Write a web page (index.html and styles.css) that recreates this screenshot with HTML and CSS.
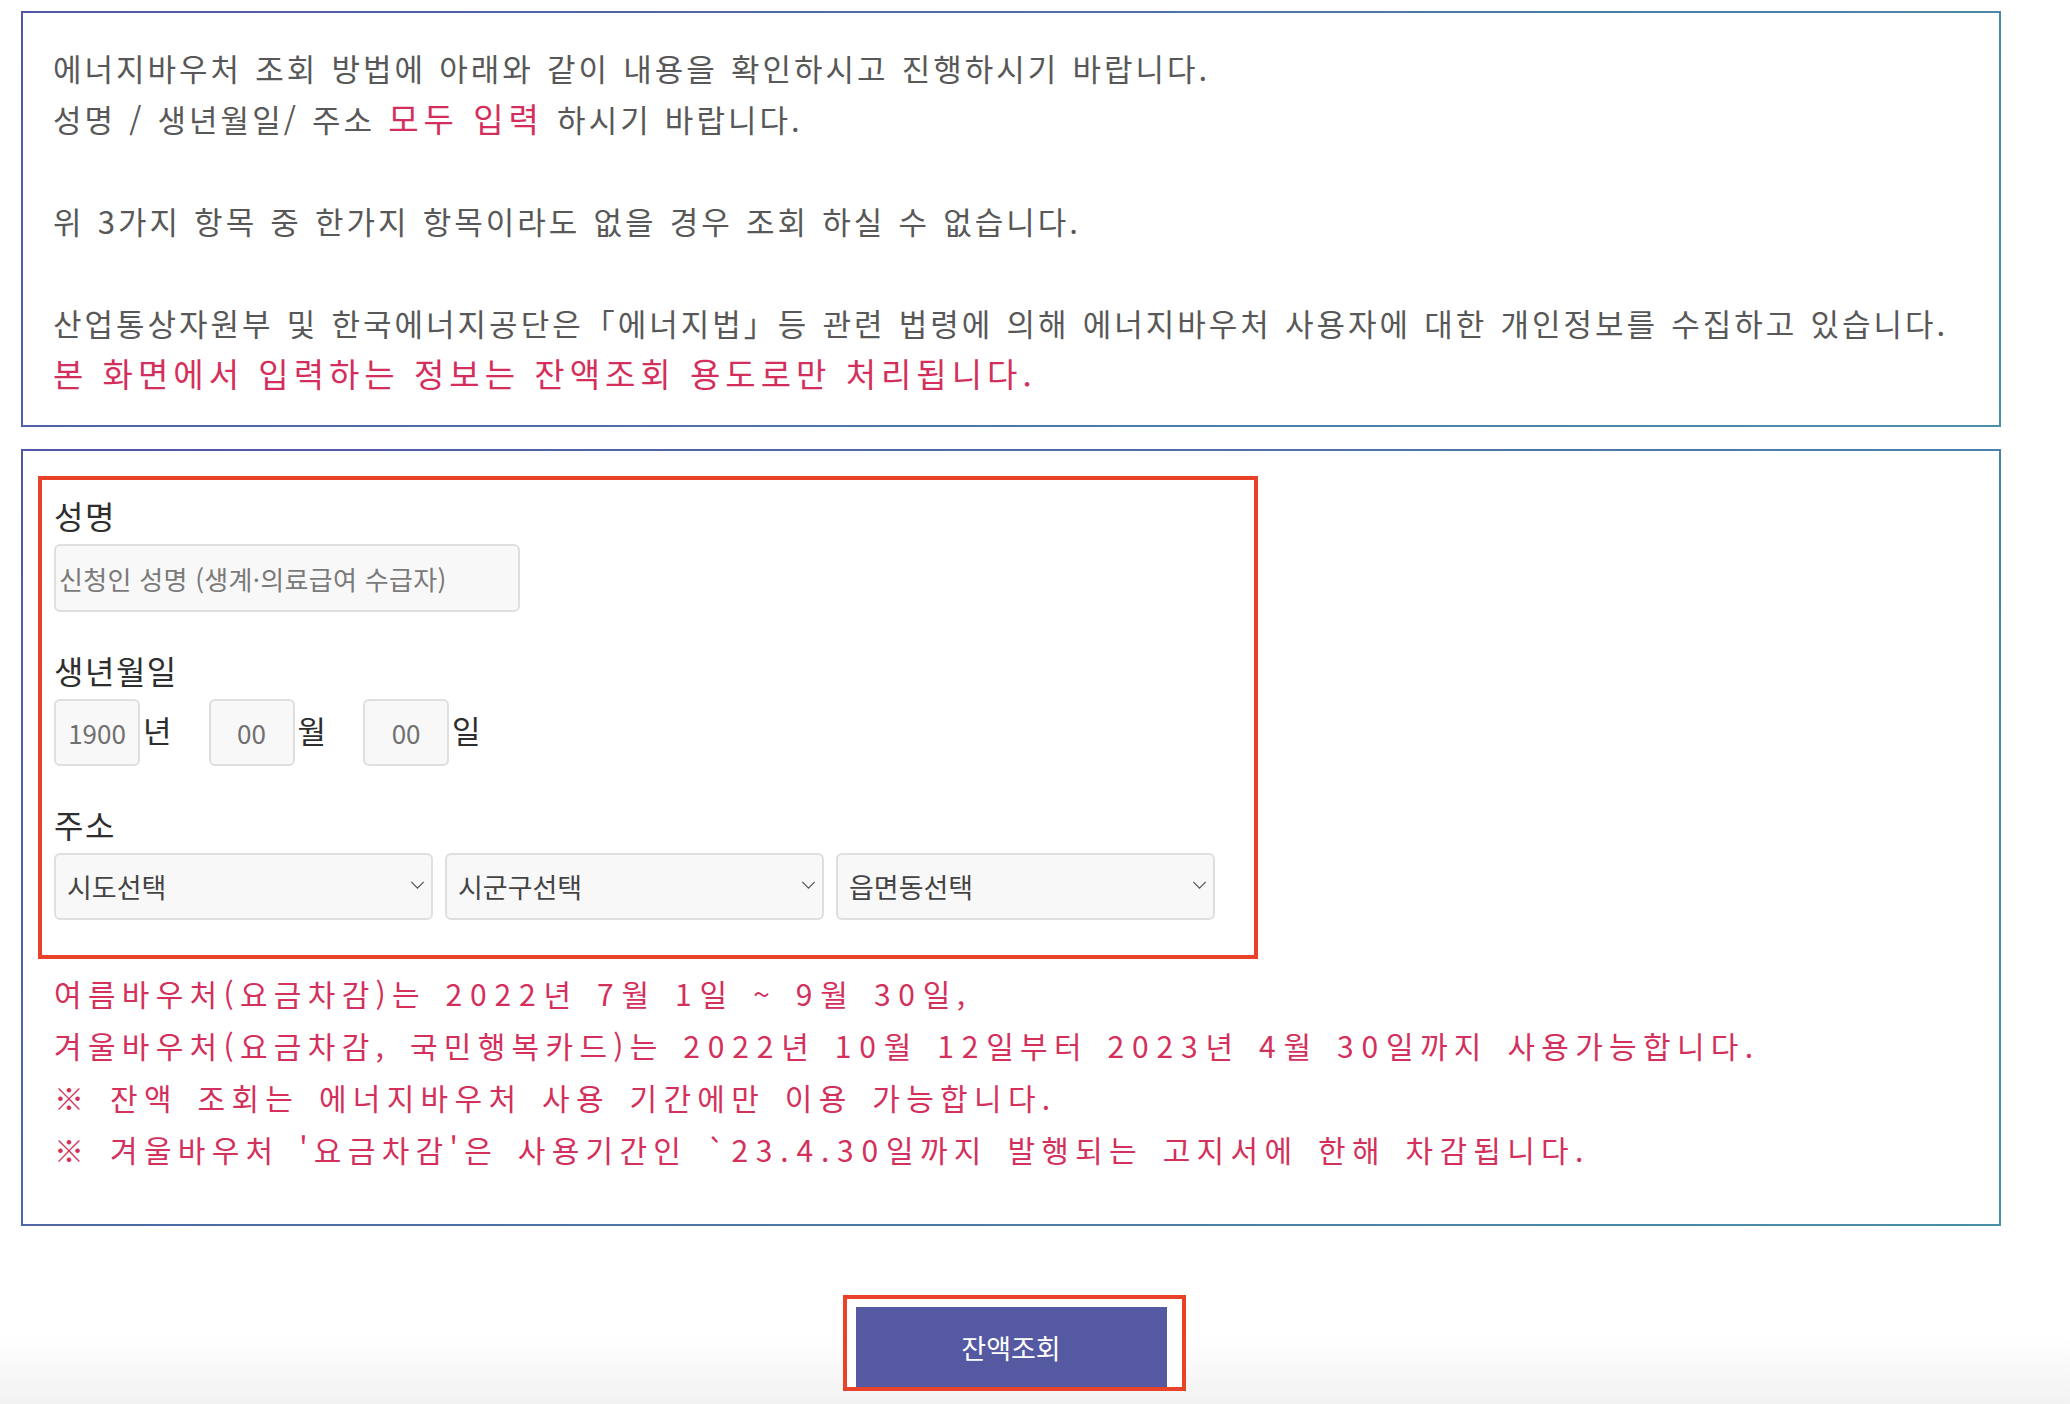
FILE: index.html
```html
<!DOCTYPE html>
<html lang="ko">
<head>
<meta charset="utf-8">
<title>에너지바우처 잔액조회</title>
<link rel="stylesheet" href="styles.css">
</head>
<body>
<div class="page">
  <section class="notice">
    <p>에너지바우처 조회 방법에 아래와 같이 내용을 확인하시고 진행하시기 바랍니다.<br>성명 / 생년월일/ 주소 <span class="em">모두 입력</span> 하시기 바랍니다.</p>
    <p>위 3가지 항목 중 한가지 항목이라도 없을 경우 조회 하실 수 없습니다.</p>
    <p>산업통상자원부 및 한국에너지공단은「에너지법」등 관련 법령에 의해 에너지바우처 사용자에 대한 개인정보를 수집하고 있습니다.<br><span class="em">본 화면에서 입력하는 정보는 잔액조회 용도로만 처리됩니다.</span></p>
  </section>

  <section class="form-box">
    <div class="fields">
      <div class="group">
        <div class="label">성명</div>
        <input class="name-input" type="text" placeholder="신청인 성명 (생계·의료급여 수급자)">
      </div>
      <div class="group">
        <div class="label">생년월일</div>
        <div class="date-row">
          <input class="date-input" type="text" placeholder="1900"><span class="unit">년</span>
          <input class="date-input" type="text" placeholder="00"><span class="unit">월</span>
          <input class="date-input" type="text" placeholder="00"><span class="unit">일</span>
        </div>
      </div>
      <div class="group">
        <div class="label">주소</div>
        <div class="addr-row">
          <div class="select-wrap">
            <select><option>시도선택</option></select>
            <svg class="chev" width="16" height="9" viewBox="0 0 16 9"><path d="M1 1l7 7 7-7" fill="none" stroke="#555" stroke-width="1.4"/></svg>
          </div>
          <div class="select-wrap">
            <select><option>시군구선택</option></select>
            <svg class="chev" width="16" height="9" viewBox="0 0 16 9"><path d="M1 1l7 7 7-7" fill="none" stroke="#555" stroke-width="1.4"/></svg>
          </div>
          <div class="select-wrap">
            <select><option>읍면동선택</option></select>
            <svg class="chev" width="16" height="9" viewBox="0 0 16 9"><path d="M1 1l7 7 7-7" fill="none" stroke="#555" stroke-width="1.4"/></svg>
          </div>
        </div>
      </div>
    </div>
    <div class="notes">
      <p>여름바우처(요금차감)는 <span class="n">2022</span>년 <span class="n">7</span>월 <span class="n">1</span>일 ~ <span class="n">9</span>월 <span class="n">30</span>일,</p>
      <p>겨울바우처(요금차감, 국민행복카드)는 <span class="n">2022</span>년 <span class="n">10</span>월 <span class="n">12</span>일부터 <span class="n">2023</span>년 <span class="n">4</span>월 <span class="n">30</span>일까지 사용가능합니다.</p>
      <p>※ 잔액 조회는 에너지바우처 사용 기간에만 이용 가능합니다.</p>
      <p>※ 겨울바우처 '요금차감'은 사용기간인 `<span class="n">23.4.30</span>일까지 발행되는 고지서에 한해 차감됩니다.</p>
    </div>
  </section>

  <div class="btn-row">
    <div class="btn-frame">
      <button class="btn" type="button">잔액조회</button>
    </div>
  </div>
</div>
</body>
</html>
```
FILE: styles.css
```css
html {
  min-height: 100%;
  background: linear-gradient(180deg, #ffffff 1335px, #f2f2f2 1404px) no-repeat;
}
body {
  margin: 0;
  font-family: "Noto Sans CJK KR", "Noto Sans", sans-serif;
  color: #555;
}
.page {
  padding: 11px 0 0 21px;
  width: 1980px;
}
.notice {
  box-sizing: border-box;
  width: 1980px;
  border: 2px solid #4f6aa6;
  border-image: linear-gradient(135deg, #5356a8, #4891a8) 1;
  padding: 29px 30px 26px 30px;
  font-size: 31px;
  line-height: 51px;
  color: #585858;
  letter-spacing: 3px;
  word-spacing: 1.5px;
}
.notice p {
  margin: 0 0 51px;
}
.notice p:last-child {
  margin-bottom: 0;
}
.em {
  color: #d42f5c;
  font-size: 33px;
  letter-spacing: 5px;
  word-spacing: 0;
}
.form-box {
  box-sizing: border-box;
  width: 1980px;
  margin-top: 22px;
  border: 2px solid #4f6aa6;
  border-image: linear-gradient(135deg, #5356a8, #4891a8) 1;
  padding: 25px 15px 49px 15px;
}
.fields {
  box-sizing: border-box;
  width: 1220px;
  border: 4px solid #e8422a;
  padding: 15px 12px 35px 12px;
}
.group + .group {
  margin-top: 38px;
}
.label {
  font-size: 32px;
  line-height: 40px;
  height: 40px;
  color: #2e2e2e;
  letter-spacing: 1.5px;
  margin-bottom: 9px;
}
input, select, button {
  font-family: "Noto Sans CJK KR", "Noto Sans", sans-serif;
}
.name-input {
  display: block;
  box-sizing: border-box;
  width: 466px;
  height: 68px;
  margin: 0;
  padding: 0 0 0 3px;
  border: 2px solid #dfdfdf;
  border-radius: 6px;
  background: #f8f8f8;
  font-size: 26px;
  letter-spacing: 0.3px;
  color: #333;
  outline: none;
}
.name-input::placeholder {
  color: #7a7a7a;
}
.date-row {
  display: flex;
  align-items: center;
  height: 67px;
}
.date-input {
  box-sizing: border-box;
  width: 86px;
  height: 67px;
  margin: 0;
  padding: 0;
  border: 2px solid #dfdfdf;
  border-radius: 6px;
  background: #f8f8f8;
  font-size: 26px;
  text-align: center;
  color: #333;
  outline: none;
}
.date-input::placeholder {
  color: #707070;
}
.unit {
  font-size: 31px;
  color: #2e2e2e;
  margin-left: 3px;
  margin-right: 37px;
  line-height: 40px;
  position: relative;
  top: -3px;
}
.addr-row {
  display: flex;
  gap: 12px;
}
.select-wrap {
  position: relative;
  width: 379px;
  height: 67px;
}
.select-wrap select {
  -webkit-appearance: none;
  appearance: none;
  box-sizing: border-box;
  width: 100%;
  height: 67px;
  margin: 0;
  padding: 0 0 0 11px;
  border: 2px solid #dfdfdf;
  border-radius: 6px;
  background: #f8f8f8;
  font-size: 27px;
  color: #444;
  outline: none;
}
.chev {
  position: absolute;
  right: 8px;
  top: 28px;
  width: 15px;
  height: 8px;
  pointer-events: none;
}
.notes {
  margin-top: 8px;
  padding-left: 16px;
  font-size: 30px;
  line-height: 52px;
  color: #d3305c;
  letter-spacing: 6.3px;
  word-spacing: 5px;
}
.notes p {
  margin: 0;
}
.notes .n {
  letter-spacing: 7.8px;
}
.btn-row {
  display: flex;
  justify-content: center;
  padding-left: 6px;
  margin-top: 69px;
}
.btn-frame {
  border: 4px solid #e8422a;
  padding: 8px 15px 0 9px;
  background: #fff;
}
.btn {
  display: block;
  width: 311px;
  height: 80px;
  margin: 0;
  border: 0;
  padding: 0;
  background: #5559a1;
  color: #fff;
  font-size: 27px;
}
```
